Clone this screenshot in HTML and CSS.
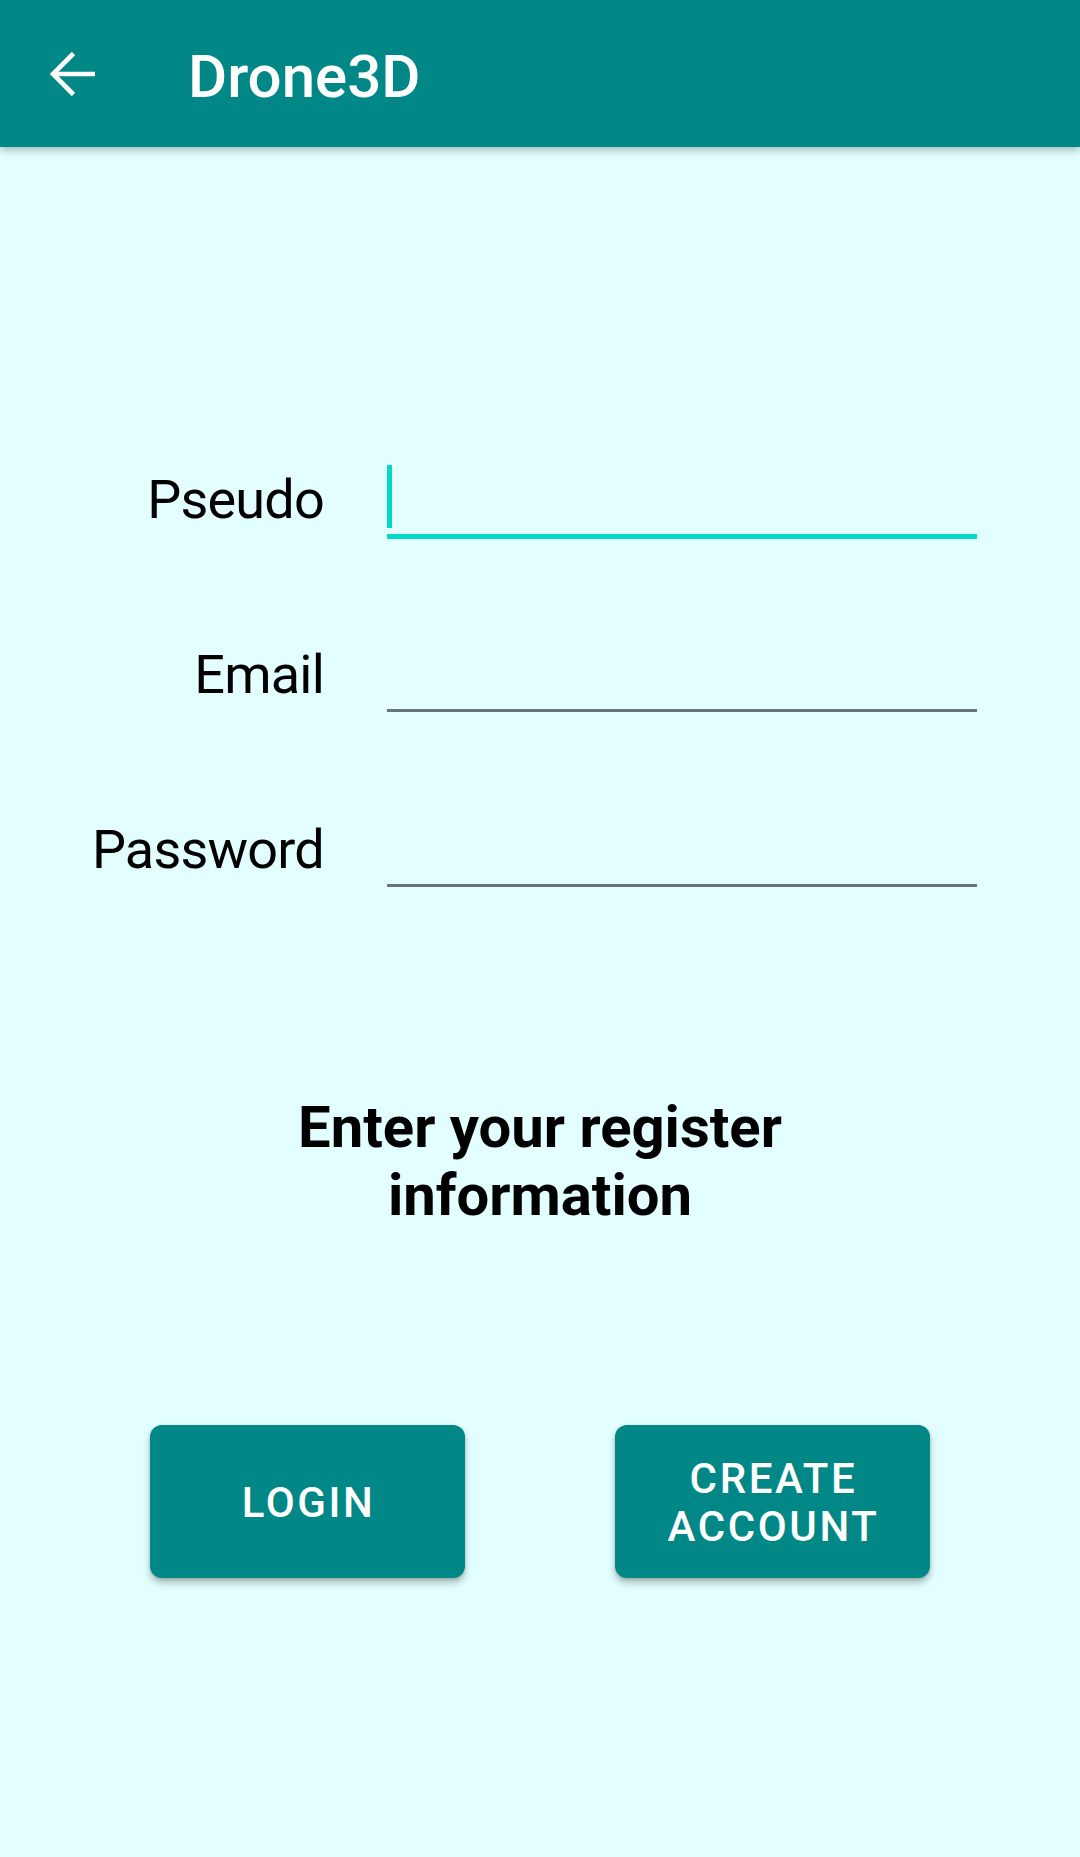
FILE: index.html
```html
<!DOCTYPE html>
<html lang="en">
<head>
<meta charset="utf-8">
<title>Drone3D</title>
<link rel="stylesheet" href="styles.css">
</head>
<body>
<header class="appbar">
  <svg class="back" width="48" height="48" viewBox="0 0 48 48" aria-hidden="true">
    <path d="M3 24H45" fill="none" stroke="#fff" stroke-width="4.6"/>
    <path d="M23.5 3.5L3 24L23.5 44.5" fill="none" stroke="#fff" stroke-width="4.6"/>
  </svg>
  <h1 class="title">Drone3D</h1>
</header>
<main class="content">
  <form class="form">
    <div class="row">
      <label class="label">Pseudo</label>
      <div class="field focused"><span class="caret"></span></div>
    </div>
    <div class="row">
      <label class="label">Email</label>
      <div class="field"></div>
    </div>
    <div class="row">
      <label class="label">Password</label>
      <div class="field"></div>
    </div>
  </form>
  <p class="heading">Enter your register<br>information</p>
  <div class="actions">
    <button class="btn" type="button">LOGIN</button>
    <button class="btn" type="button">CREATE<br>ACCOUNT</button>
  </div>
</main>
</body>
</html>
```
FILE: styles.css
```css
html, body {
  margin: 0;
  padding: 0;
}
body {
  width: 1080px;
  height: 1857px;
  background: #e2fefe;
  font-family: Roboto, "Noto Sans", sans-serif;
  overflow: hidden;
}
.appbar {
  position: relative;
  z-index: 1;
  height: 147px;
  background: #018786;
  display: flex;
  align-items: center;
  padding-left: 50px;
  box-shadow: 0 3px 8px rgba(0, 0, 0, 0.28);
}
.back {
  display: block;
  flex: none;
}
.title {
  margin: 6px 0 0 90px;
  font-size: 60px;
  line-height: 70px;
  font-weight: 500;
  color: #fff;
}
.content {
  padding-top: 321px;
}
.form {
  margin: 0;
}
.row {
  display: grid;
  grid-template-columns: 324px 590px;
  column-gap: 63px;
  align-items: start;
  height: 175px;
}
.label {
  text-align: right;
  font-size: 54px;
  line-height: 64px;
  letter-spacing: -0.8px;
  color: #000;
}
.field {
  height: 66px;
  border-bottom: 3px solid rgba(0, 0, 0, 0.54);
}
.field.focused {
  border-bottom: 5px solid #03dac5;
}
.caret {
  display: block;
  width: 5px;
  height: 63px;
  margin-top: -3px;
  background: #03dac5;
}
.heading {
  margin: 100px 0 0;
  text-align: center;
  font-size: 58px;
  line-height: 68px;
  font-weight: 700;
  color: #000;
}
.actions {
  margin-top: 196px;
  display: flex;
  justify-content: space-evenly;
}
.btn {
  width: 315px;
  height: 153px;
  border: none;
  border-radius: 12px;
  background: #018786;
  color: #fff;
  font-family: Roboto, "Noto Sans", sans-serif;
  font-size: 42px;
  line-height: 48px;
  font-weight: 500;
  letter-spacing: 2.6px;
  padding: 3px 0 0 2px;
  box-shadow: 0 5px 7px rgba(0, 0, 0, 0.25), 0 1px 3px rgba(0, 0, 0, 0.15);
}
```
